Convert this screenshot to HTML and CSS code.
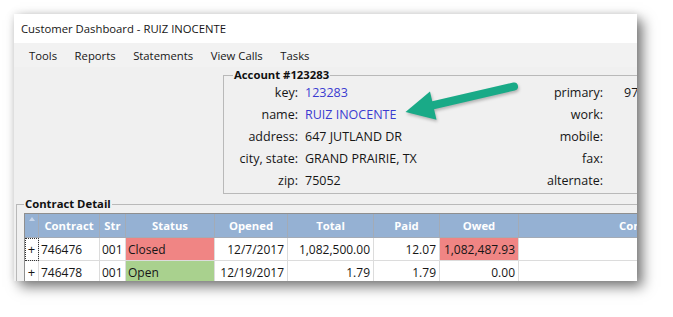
FILE: index.html
```html
<!DOCTYPE html>
<html>
<head>
<meta charset="utf-8">
<title>Customer Dashboard</title>
<link rel="stylesheet" href="styles.css">
</head>
<body>
<div class="window">
  <div class="titlebar">Customer Dashboard - RUIZ INOCENTE</div>
  <div class="menubar">
    <span>Tools</span>
    <span>Reports</span>
    <span>Statements</span>
    <span>View Calls</span>
    <span>Tasks</span>
  </div>
  <div class="content">
    <div class="group account">
      <span class="group-title">Account #123283</span>
      <div class="fields">
        <span class="lbl">key:</span><span class="val link">123283</span><span class="lbl lbl2">primary:</span><span class="val">97</span>
        <span class="lbl">name:</span><span class="val link">RUIZ INOCENTE</span><span class="lbl lbl2">work:</span><span class="val"></span>
        <span class="lbl">address:</span><span class="val">647 JUTLAND DR</span><span class="lbl lbl2">mobile:</span><span class="val"></span>
        <span class="lbl">city, state:</span><span class="val">GRAND PRAIRIE, TX</span><span class="lbl lbl2">fax:</span><span class="val"></span>
        <span class="lbl">zip:</span><span class="val">75052</span><span class="lbl lbl2">alternate:</span><span class="val"></span>
      </div>
    </div>
    <div class="group contracts">
      <span class="group-title">Contract Detail</span>
      <div class="datagrid">
        <div class="hd corner"><span class="sort"></span></div>
        <div class="hd">Contract</div>
        <div class="hd">Str</div>
        <div class="hd">Status</div>
        <div class="hd">Opened</div>
        <div class="hd">Total</div>
        <div class="hd">Paid</div>
        <div class="hd">Owed</div>
        <div class="hd hd-last">Comments</div>

        <div class="cell rowhd focus">+</div>
        <div class="cell">746476</div>
        <div class="cell">001</div>
        <div class="cell closed">Closed</div>
        <div class="cell num">12/7/2017</div>
        <div class="cell num">1,082,500.00</div>
        <div class="cell num">12.07</div>
        <div class="cell num closed">1,082,487.93</div>
        <div class="cell"></div>

        <div class="cell rowhd">+</div>
        <div class="cell">746478</div>
        <div class="cell">001</div>
        <div class="cell open">Open</div>
        <div class="cell num">12/19/2017</div>
        <div class="cell num">1.79</div>
        <div class="cell num">1.79</div>
        <div class="cell num">0.00</div>
        <div class="cell"></div>
      </div>
    </div>
  </div>
</div>
<svg class="arrow" width="673" height="317" viewBox="0 0 673 317" aria-hidden="true">
  <g class="arrow-shape">
    <line x1="432" y1="105.5" x2="514" y2="86.5" stroke="#19aa87" stroke-width="8" stroke-linecap="round"/>
    <polygon points="405.5,112 430,91.5 436.5,119.7" fill="#19aa87"/>
  </g>
</svg>
</body>
</html>
```
FILE: styles.css
```css
* { box-sizing: border-box; }
html, body { margin: 0; padding: 0; }
body {
  position: relative;
  width: 673px;
  height: 317px;
  overflow: hidden;
  background: #ffffff;
  padding: 14px 0 0 14px;
  font-family: "Open Sans", "Noto Sans", sans-serif;
  font-size: 11.3px;
  color: #161616;
}
.window {
  width: 623px;
  height: 267px;
  background: #f0f0f0;
  overflow: hidden;
  box-shadow: 6px 6px 12px rgba(0, 0, 0, 0.5), 0 0 8px rgba(0, 0, 0, 0.12);
}
.titlebar {
  height: 29px;
  background: #ffffff;
  padding-left: 7px;
  display: flex;
  align-items: center;
  white-space: nowrap;
}
.menubar {
  height: 24px;
  background: #f2f2f2;
  display: flex;
  align-items: center;
  gap: 17.5px;
  padding-left: 15px;
  white-space: nowrap;
}
.content {
  padding-top: 8px;
}
.group {
  position: relative;
  border: 1px solid #b9b9b9;
}
.group-title {
  position: absolute;
  top: -9px;
  left: 9px;
  padding: 0 1px;
  background: #f0f0f0;
  font-weight: 700;
  line-height: 16px;
  color: #111;
  white-space: nowrap;
}
.account {
  margin-left: 209px;
  width: 440px;
  height: 119px;
  padding: 5px 0 0 4px;
}
.fields {
  display: grid;
  grid-template-columns: 77px 198px 121px auto;
  grid-auto-rows: 22px;
  align-items: center;
  white-space: nowrap;
  font-size: 12.5px;
}
.lbl {
  text-align: right;
  padding-right: 7px;
}
.lbl2 {
  padding-right: 21px;
}
.link {
  color: #3b3bd0;
}
.contracts {
  margin: 10px 0 0 2px;
  width: 760px;
  height: 120px;
  padding: 8px 0 0 7px;
}
.contracts .group-title {
  left: 7px;
}
.datagrid {
  display: grid;
  grid-template-columns: 14px 61px 26px 89px 73px 86px 66px 79px 262px;
  grid-template-rows: 24px 23px 23px;
  width: max-content;
  border-top: 1px solid #8f8f8f;
  border-left: 1px solid #8f8f8f;
  white-space: nowrap;
}
.hd {
  background: #95b1d3;
  color: #ffffff;
  font-weight: 700;
  display: flex;
  align-items: center;
  justify-content: center;
  border-right: 1px solid #a3abb6;
  border-bottom: 1px solid #a3abb6;
}
.hd-last {
  justify-content: center;
}
.corner {
  align-items: flex-start;
  justify-content: flex-start;
  padding: 3px 0 0 4px;
}
.sort {
  width: 0;
  height: 0;
  border-left: 3px solid transparent;
  border-right: 3px solid transparent;
  border-bottom: 4px solid #c9d7ea;
}
.cell {
  background: #ffffff;
  display: flex;
  align-items: center;
  padding: 0 3px 0 2px;
  border-right: 1px solid #dcdcdc;
  border-bottom: 1px solid #dcdcdc;
  overflow: hidden;
  font-size: 12px;
}
.num {
  justify-content: flex-end;
  padding-right: 3px;
}
.rowhd {
  justify-content: center;
  padding: 0;
  font-size: 13px;
}
.focus {
  outline: 1px dotted #333;
  outline-offset: -1px;
}
.closed {
  background: #f08584;
}
.open {
  background: #a9d18e;
}
.arrow {
  position: absolute;
  left: 0;
  top: 0;
  pointer-events: none;
}
.arrow-shape {
  filter: drop-shadow(1px 2px 1.5px rgba(0, 0, 0, 0.25));
}
```
